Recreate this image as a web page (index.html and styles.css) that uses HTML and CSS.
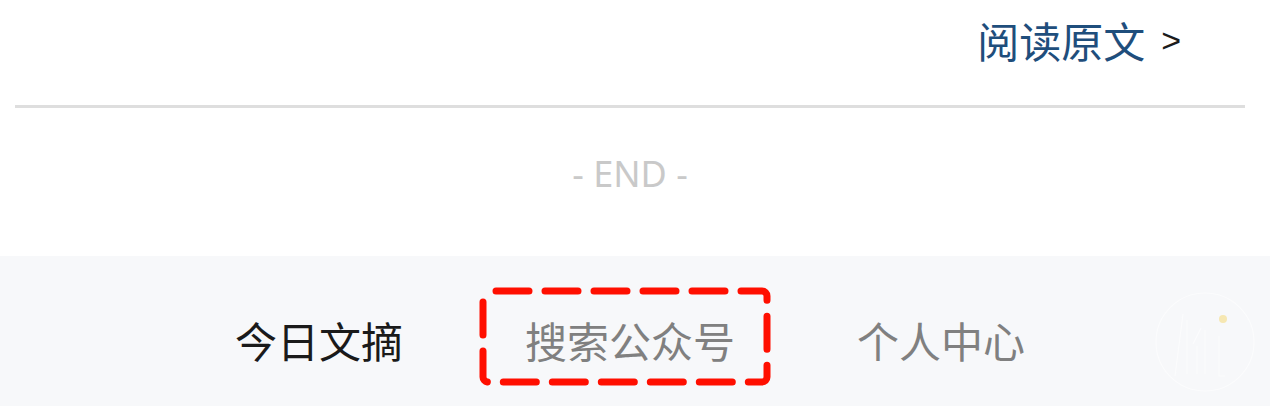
FILE: index.html
```html
<!DOCTYPE html>
<html lang="zh">
<head>
<meta charset="utf-8">
<link rel="stylesheet" href="styles.css">
</head>
<body>
<div class="page">
  <div class="read-more">
    <span class="read-text">阅读原文</span><span class="read-arrow">&gt;</span>
  </div>
  <div class="divider"></div>
  <div class="end">- END -</div>
  <div class="tabbar">
    <div class="tab tab-active">今日文摘</div>
    <div class="tab tab-marked">搜索公众号
      <svg class="mark" width="292" height="99" viewBox="0 0 292 99">
        <rect x="4" y="4" width="284" height="91" rx="5" ry="5" fill="none" stroke="#ff0f00" stroke-width="7" stroke-dasharray="33 16" stroke-dashoffset="-8" stroke-linecap="round"/>
      </svg>
    </div>
    <div class="tab">个人中心</div>
    <svg class="logo" width="104" height="104" viewBox="0 0 104 104">
      <circle cx="52" cy="52" r="49" fill="none" stroke="#ffffff" stroke-opacity="0.55" stroke-width="1.2"/>
      <path d="M22 86 L30 24 M34 30 L34 84 M40 54 L48 38 M44 56 L44 84 M52 40 L52 84 M66 46 L66 86 L72 86" fill="none" stroke="#ffffff" stroke-opacity="0.55" stroke-width="1.2"/>
      <circle cx="70" cy="29" r="4" fill="#f6e7b2"/>
    </svg>
  </div>
</div>
</body>
</html>
```

FILE: styles.css
```css
* { box-sizing: border-box; }
html, body { margin: 0; padding: 0; background: #ffffff; }
body {
  width: 1270px;
  height: 406px;
  overflow: hidden;
  font-family: "Noto Sans CJK SC", "Noto Sans", sans-serif;
}
.page { display: flex; flex-direction: column; height: 406px; }
.read-more {
  height: 80px;
  display: flex;
  justify-content: flex-end;
  align-items: center;
  padding-right: 89px;
}
.read-text {
  font-size: 42px;
  line-height: 1;
  color: #1f4e7c;
}
.read-arrow {
  font-family: "Liberation Sans", sans-serif;
  font-size: 34px;
  color: #1c1c1c;
  margin-left: 16px;
  line-height: 1;
}
.divider {
  margin: 25px 25px 0 15px;
  height: 3px;
  background: #dedede;
}
.end {
  height: 148px;
  display: flex;
  justify-content: center;
  align-items: center;
  padding: 0 10px 18px 0;
  font-family: "Noto Sans", sans-serif;
  font-size: 36px;
  color: #c9c9c9;
}
.tabbar {
  position: relative;
  flex: 1;
  background: #f7f8fa;
  display: flex;
  justify-content: center;
  align-items: center;
  gap: 122px;
  padding: 18px 10px 0 0;
}
.tab {
  font-size: 42px;
  line-height: 1;
  color: #808080;
}
.tab-active { color: #1a1a1a; }
.tab-marked { position: relative; }
.mark {
  position: absolute;
  left: -46px;
  top: -32px;
}
.logo {
  position: absolute;
  left: 1153px;
  top: 34px;
}
```
